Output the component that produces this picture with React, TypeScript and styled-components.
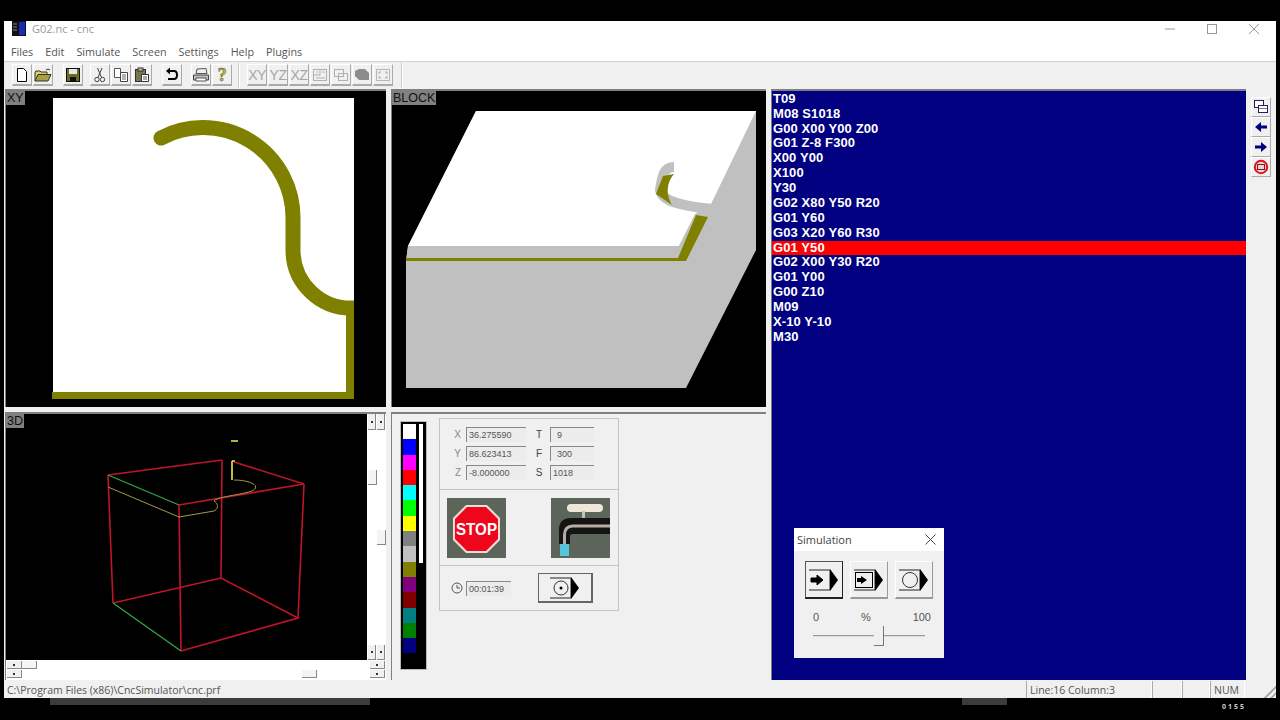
import React from "react";
import styled, { createGlobalStyle } from "styled-components";

const GlobalStyle = createGlobalStyle`
  html, body {
    margin: 0;
    height: 100%;
    background: #000;
    overflow: hidden;
  }
  * { box-sizing: border-box; }
`;

const PALETTE = [
  "#fff", "#0000ff", "#ff00ff", "#ff0000", "#00ffff", "#00ff00", "#ffff00", "#808080",
  "#c0c0c0", "#808000", "#800080", "#800000", "#008080", "#008000", "#000080",
];

const CODE = [
  "T09", "M08 S1018", "G00 X00 Y00 Z00", "G01 Z-8 F300", "X00 Y00", "X100", "Y30",
  "G02 X80 Y50 R20", "G01 Y60", "G03 X20 Y60 R30", "G01 Y50", "G02 X00 Y30 R20",
  "G01 Y00", "G00 Z10", "M09", "X-10 Y-10", "M30",
];
const ACTIVE_LINE = 10;

const MENUS = ["Files", "Edit", "Simulate", "Screen", "Settings", "Help", "Plugins"];

function App() {
  return (
    <Screen>
      <GlobalStyle />
      <Window>
        <TitleBar>
          <AppIcon />
          <TitleText>G02.nc - cnc</TitleText>
          <Controls>
            <svg width="12" height="12" viewBox="0 0 12 12"><path d="M1 6h10" stroke="#999" /></svg>
            <svg width="12" height="12" viewBox="0 0 12 12"><rect x="1.5" y="1.5" width="9" height="9" fill="none" stroke="#999" /></svg>
            <svg width="12" height="12" viewBox="0 0 12 12"><path d="M1 1l10 10M11 1L1 11" stroke="#999" /></svg>
          </Controls>
        </TitleBar>
        <MenuBar>
          {MENUS.map((m) => <MenuItem key={m}>{m}</MenuItem>)}
        </MenuBar>
        <Toolbar>
          <ToolGroup>
            <ToolButton><NewIcon /></ToolButton>
            <ToolButton><OpenIcon /></ToolButton>
          </ToolGroup>
          <ToolGroup $gap={10}>
            <ToolButton><SaveIcon /></ToolButton>
          </ToolGroup>
          <ToolGroup $gap={7}>
            <ToolButton><CutIcon /></ToolButton>
            <ToolButton><CopyIcon /></ToolButton>
            <ToolButton><PasteIcon /></ToolButton>
          </ToolGroup>
          <ToolGroup $gap={10}>
            <ToolButton><UndoIcon /></ToolButton>
          </ToolGroup>
          <ToolGroup $gap={9}>
            <ToolButton><PrintIcon /></ToolButton>
            <ToolButton><HelpIcon /></ToolButton>
          </ToolGroup>
          <ToolSeparator $left={6} />
          <ToolGroup $gap={7}>
            <ToolButton>XY</ToolButton>
            <ToolButton>YZ</ToolButton>
            <ToolButton>XZ</ToolButton>
            <ToolButton><GridIcon /></ToolButton>
            <ToolButton><OverlapIcon /></ToolButton>
            <ToolButton><SolidIcon /></ToolButton>
            <ToolButton><FitIcon /></ToolButton>
          </ToolGroup>
          <ToolSeparator $left={8} />
        </Toolbar>

        <Body>
          <Views>
            <Pane>
              <PaneLabel>XY</PaneLabel>
              <XYDrawing />
            </Pane>
            <Pane>
              <PaneLabel>BLOCK</PaneLabel>
              <BlockDrawing />
            </Pane>
            <Pane3D>
              <PaneLabel>3D</PaneLabel>
              <WireDrawing />
              <VBar>
                <VTrack>
                  <Spin $w={8} $h={16} />
                  <Thumb $w={9} $h={15} $top={40} />
                  <Spin $w={8} $h={15} $end />
                </VTrack>
                <VTrack>
                  <Spin $w={8} $h={16} />
                  <Thumb $w={9} $h={15} $top={100} />
                  <Spin $w={8} $h={15} $end />
                </VTrack>
              </VBar>
              <HBar>
                <HTrack>
                  <Spin $w={15} $h={8} />
                  <Thumb $w={15} $h={8} />
                  <Spin $w={15} $h={8} $end />
                </HTrack>
                <HTrack>
                  <Spin $w={15} $h={8} />
                  <Thumb $w={15} $h={8} $left={280} />
                  <Spin $w={15} $h={8} $end />
                </HTrack>
              </HBar>
            </Pane3D>
            <ControlPane>
              <Palette>
                <Swatches>
                  {PALETTE.map((c) => <Swatch key={c} $color={c} />)}
                </Swatches>
                <Level />
              </Palette>
              <Info>
                <Coords>
                  <CoordLabel>X</CoordLabel><Field>36.275590</Field>
                  <ParamLabel>T</ParamLabel><Field $indent>9</Field>
                  <CoordLabel>Y</CoordLabel><Field>86.623413</Field>
                  <ParamLabel>F</ParamLabel><Field $indent>300</Field>
                  <CoordLabel>Z</CoordLabel><Field>-8.000000</Field>
                  <ParamLabel>S</ParamLabel><Field>1018</Field>
                </Coords>
                <Signs>
                  <StopSign />
                  <Faucet />
                </Signs>
                <TimeRow>
                  <ClockIcon />
                  <TimeField>00:01:39</TimeField>
                  <WideButton><HeadIcon kind="target" /></WideButton>
                </TimeRow>
              </Info>
            </ControlPane>
          </Views>

          <Editor>
            {CODE.map((line, i) => (
              <CodeLine key={i} $active={i === ACTIVE_LINE}>{line}</CodeLine>
            ))}
            <SimWindow>
              <SimTitle>
                Simulation
                <svg width="11" height="11" viewBox="0 0 11 11"><path d="M.5.5l10 10M10.5.5l-10 10" stroke="#444" /></svg>
              </SimTitle>
              <SimButtons>
                <SimButton $pressed><HeadIcon kind="arrow" /></SimButton>
                <SimButton><HeadIcon kind="boxed" /></SimButton>
                <SimButton><HeadIcon kind="circle" /></SimButton>
              </SimButtons>
              <Scale>
                <span>0</span>
                <span>%</span>
                <span>100</span>
              </Scale>
              <Slider>
                <SliderThumb />
              </Slider>
            </SimWindow>
          </Editor>

          <SideBar>
            <SideButton><WindowsIcon /></SideButton>
            <SideButton><ArrowIcon dir="left" /></SideButton>
            <SideButton><ArrowIcon dir="right" /></SideButton>
            <SideButton><NoEntryIcon /></SideButton>
          </SideBar>
        </Body>

        <StatusBar>
          <StatusPath>C:\Program Files (x86)\CncSimulator\cnc.prf</StatusPath>
          <StatusCell $w={126}>Line:16 Column:3</StatusCell>
          <StatusCell $w={30} />
          <StatusCell $w={28} />
          <StatusCell $w={35}>NUM</StatusCell>
          <Grip />
        </StatusBar>
      </Window>
      <Footer>
        <FooterBar $left={46} $w={320} />
        <FooterBar $left={958} $w={45} />
        <FooterTime>0155</FooterTime>
      </Footer>
    </Screen>
  );
}

export default App;

/* ---------- drawings ---------- */

function AppIcon() {
  return (
    <svg width="14" height="15" viewBox="0 0 14 15">
      <rect width="14" height="15" fill="#111" />
      <rect x="7" y="1" width="6" height="13" fill="#1a2bb0" />
      <path d="M1 3h4M1 6h4M1 9h4" stroke="#889" />
    </svg>
  );
}

function XYDrawing() {
  return (
    <svg width="380" height="316" viewBox="6 91 380 316">
      <rect x="53" y="98" width="301" height="294" fill="#fff" />
      <path d="M161 138 A90 90 0 0 1 293 218 V250 A58 58 0 0 0 354 308" fill="none" stroke="#808000" strokeWidth="15" strokeLinecap="round" />
      <rect x="354" y="296" width="10" height="24" fill="#000" />
      <path d="M52 392H346V308h8V399H52z" fill="#808000" />
    </svg>
  );
}

function BlockDrawing() {
  return (
    <svg width="374" height="316" viewBox="392 91 374 316">
      <path d="M406 261V388H686L756 250V111H476L408 246z" fill="#c0c0c0" />
      <path d="M476 111H756L711 204 695 214 679 246H408z" fill="#fff" />
      <path d="M408 246H679L695 215 709 216 686 261H406z" fill="#c0c0c0" />
      <path d="M406 258H678L696 215 708 217 686 261H406z" fill="#808000" />
      <path d="M674 167C662 167 662 180 660 190 662 201 680 206 712 209" fill="none" stroke="#c0c0c0" strokeWidth="10" />
      <path d="M674 174L663 176 656 194 672 205C666 195 666 183 674 174z" fill="#808000" />
    </svg>
  );
}

function WireDrawing() {
  const red = "#c01428";
  return (
    <svg width="361" height="246" viewBox="6 414 361 246">
      <g fill="none" stroke={red} strokeWidth="1.6">
        <path d="M108 475L222 460M234 462L304 484M179 505L304 484" />
        <path d="M108 475L113 603M222 460L221 578M304 484L298 618M179 505L181 651" />
        <path d="M113 603L221 578L298 618L181 651" />
      </g>
      <path d="M108 475L179 505M113 603L181 651" fill="none" stroke="#2fa84a" strokeWidth="1.3" />
      <path d="M108 487L179 517L214 511C220 508 217 502 214 501 216 497 240 495 252 491 262 486 250 480 234 480" fill="none" stroke="#a09a40" strokeWidth="1" />
      <path d="M232 461V480M232 461h3M231 441h7" fill="none" stroke="#f0e850" strokeWidth="1.6" />
    </svg>
  );
}

function StopSign() {
  return (
    <svg width="59" height="60" viewBox="0 0 59 60">
      <rect width="59" height="60" fill="#5c655a" />
      <path d="M19 7H40L53 20V42L40 55H19L6 42V20z" fill="#f2dcd8" />
      <path d="M20 9H39L51 21V41L39 53H20L8 41V21z" fill="#f0061c" />
      <text x="9" y="37" textLength="41" lengthAdjust="spacingAndGlyphs" fontFamily="Liberation Sans, sans-serif" fontWeight="700" fontSize="17" fill="#fff">STOP</text>
    </svg>
  );
}

function Faucet() {
  return (
    <svg width="59" height="60" viewBox="0 0 59 60">
      <rect width="59" height="60" fill="#5c655a" />
      <rect x="16" y="6" width="36" height="8" rx="4" fill="#efe8da" />
      <rect x="31" y="13" width="3" height="7" fill="#c8c0b0" />
      <path d="M59 20H20Q8 20 8 32V46H19V38Q19 36 22 36H59z" fill="#141414" />
      <path d="M59 28H22Q13.5 28 13.5 37V46" fill="none" stroke="#b8aea4" strokeWidth="3" />
      <rect x="9" y="46" width="9" height="12" fill="#55c4dc" />
    </svg>
  );
}

function ClockIcon() {
  return (
    <svg width="12" height="12" viewBox="0 0 12 12">
      <circle cx="6" cy="6" r="5" fill="none" stroke="#555" />
      <path d="M6 3v3h3" fill="none" stroke="#555" />
    </svg>
  );
}

function HeadIcon({ kind }: { kind: "arrow" | "boxed" | "circle" | "target" }) {
  return (
    <svg width="32" height="26" viewBox="0 0 32 26">
      <path d="M1 3H22V23H1" fill="none" stroke="#222" />
      <path d="M22 2L30 13 22 24z" fill="#000" />
      {kind === "arrow" && <path d="M3 13H12M9 8L15 13 9 18V15H3V11H9z" fill="#000" stroke="#000" />}
      {kind === "boxed" && (
        <>
          <rect x="2.5" y="5.5" width="17" height="15" fill="none" stroke="#000" />
          <path d="M4 13H10M8 9L14 13 8 17V15H4V11H8z" fill="#000" />
        </>
      )}
      {kind === "circle" && <circle cx="12" cy="13" r="7.5" fill="#f0f0f0" stroke="#333" />}
      {kind === "target" && (
        <>
          <circle cx="12" cy="13" r="7" fill="#f0f0f0" stroke="#333" />
          <circle cx="12" cy="13" r="1.5" fill="#000" />
        </>
      )}
    </svg>
  );
}

const NewIcon = () => (
  <svg width="16" height="16" viewBox="0 0 16 16">
    <path d="M3.5 1.5h6l3 3v10h-9z" fill="#fff" stroke="#000" />
  </svg>
);
const OpenIcon = () => (
  <svg width="18" height="16" viewBox="0 0 18 16">
    <path d="M1 14V5l1-1h4l1 1h6v2" fill="#d8d060" stroke="#333" />
    <path d="M1 14L4 7.5H17L14 14z" fill="#a8a040" stroke="#333" />
    <path d="M12 3Q14 1 16 3" fill="none" stroke="#333" />
  </svg>
);
const SaveIcon = () => (
  <svg width="16" height="16" viewBox="0 0 16 16">
    <rect x="1.5" y="1.5" width="13" height="13" fill="#6c6c20" stroke="#111" />
    <rect x="4" y="2" width="8" height="5" fill="#e8e8e8" />
    <rect x="5" y="10" width="6" height="4.5" fill="#111" />
  </svg>
);
const CutIcon = () => (
  <svg width="16" height="16" viewBox="0 0 16 16">
    <path d="M5.5 1L9.5 10.5M10 1L6 10.5" stroke="#444" fill="none" />
    <circle cx="5" cy="12.5" r="2.2" fill="none" stroke="#444" />
    <circle cx="10.5" cy="12.5" r="2.2" fill="none" stroke="#444" />
  </svg>
);
const CopyIcon = () => (
  <svg width="16" height="16" viewBox="0 0 16 16">
    <path d="M1.5 1.5h6v9h-6z" fill="#fff" stroke="#555" />
    <path d="M7.5 5.5h7v9h-7z" fill="#fff" stroke="#444" />
    <path d="M9 8h4M9 10h4M9 12h4" stroke="#666" />
  </svg>
);
const PasteIcon = () => (
  <svg width="16" height="16" viewBox="0 0 16 16">
    <rect x="1.5" y="2.5" width="10" height="12" fill="#77774a" stroke="#333" />
    <rect x="4" y="1" width="5" height="3" fill="#bbb" stroke="#333" />
    <path d="M7.5 7.5h7v7h-7z" fill="#fff" stroke="#333" />
    <path d="M9 10h4M9 12h4" stroke="#555" />
  </svg>
);
const UndoIcon = () => (
  <svg width="16" height="16" viewBox="0 0 16 16">
    <path d="M5 4H10Q13 4 13 8T10 12H4" fill="none" stroke="#000" strokeWidth="2" />
    <path d="M6 0.5V7.5L2 4z" fill="#000" />
  </svg>
);
const PrintIcon = () => (
  <svg width="18" height="16" viewBox="0 0 18 16">
    <path d="M5 2l9-.5 1 5H4z" fill="#eee" stroke="#555" />
    <path d="M1.5 8h15v5h-15z" fill="#bbb" stroke="#444" />
    <path d="M4 11h10v3H4z" fill="#fff" stroke="#555" />
  </svg>
);
const HelpIcon = () => (
  <svg width="16" height="18" viewBox="0 0 16 18">
    <text x="8" y="15" textAnchor="middle" fontFamily="Liberation Serif, serif" fontWeight="700" fontSize="18" fill="#c8c020" stroke="#444" strokeWidth=".5">?</text>
  </svg>
);
const GridIcon = () => (
  <svg width="16" height="14" viewBox="0 0 16 14">
    <rect x="1.5" y="1.5" width="13" height="11" fill="none" stroke="#b0b0b0" />
    <path d="M8 2v5M2 7h6M4 4h2M10 4h3M4 10h9" stroke="#b0b0b0" />
  </svg>
);
const OverlapIcon = () => (
  <svg width="16" height="14" viewBox="0 0 16 14">
    <rect x="1.5" y="1.5" width="9" height="7" fill="none" stroke="#b0b0b0" />
    <rect x="5.5" y="5.5" width="9" height="7" fill="none" stroke="#b0b0b0" />
  </svg>
);
const SolidIcon = () => (
  <svg width="16" height="14" viewBox="0 0 16 14">
    <path d="M1 3L5 1H11L15 5V12H5L1 8z" fill="#8c8c8c" />
  </svg>
);
const FitIcon = () => (
  <svg width="16" height="14" viewBox="0 0 16 14">
    <rect x="1.5" y="1.5" width="13" height="11" fill="none" stroke="#b8b8b8" />
    <path d="M4 4h2M4 4v2M12 4h-2M12 4v2M4 10h2M4 10V8M12 10h-2M12 10V8" stroke="#a8a8a8" />
  </svg>
);
const WindowsIcon = () => (
  <svg width="16" height="16" viewBox="0 0 16 16">
    <rect x="1.5" y="1.5" width="9" height="7" fill="#fff" stroke="#202060" />
    <rect x="5.5" y="6.5" width="9" height="7" fill="#fff" stroke="#202060" />
    <path d="M6 9.5h8" stroke="#808090" />
  </svg>
);
const ArrowIcon = ({ dir }: { dir: "left" | "right" }) => (
  <svg width="14" height="12" viewBox="0 0 14 12" transform={dir === "left" ? "scale(-1 1)" : undefined}>
    <path d="M1 4.5H7V1L13 6 7 11V7.5H1z" fill="#000080" />
  </svg>
);
const NoEntryIcon = () => (
  <svg width="16" height="16" viewBox="0 0 16 16">
    <circle cx="8" cy="8" r="6.2" fill="#f4d0d0" stroke="#e0101c" strokeWidth="2" />
    <rect x="4.5" y="5.5" width="7" height="5" fill="none" stroke="#702020" />
  </svg>
);

/* ---------- layout ---------- */

const Screen = styled.div`
  width: 1280px;
  height: 720px;
  padding: 21px 0 0 4px;
  font-family: "Open Sans", "Liberation Sans", sans-serif;
  overflow: hidden;
`;

const Window = styled.div`
  width: 1272px;
  height: 677px;
  background: #f0f0f0;
  display: flex;
  flex-direction: column;
`;

const TitleBar = styled.div`
  height: 20px;
  flex: none;
  background: #fff;
  display: flex;
  align-items: flex-start;
  padding-left: 8px;
`;

const TitleText = styled.span`
  margin-left: 6px;
  font-size: 11px;
  line-height: 16px;
  color: #9a9a9a;
`;

const Controls = styled.div`
  margin-left: auto;
  padding: 2px 16px 0 0;
  display: flex;
  gap: 30px;
`;

const MenuBar = styled.div`
  height: 21px;
  flex: none;
  background: #fff;
  border-bottom: 1px solid #d0d0d0;
  display: flex;
  align-items: center;
  gap: 12px;
  padding: 1px 0 0 7px;
`;

const MenuItem = styled.span`
  font-size: 10.8px;
  color: #555;
`;

const Toolbar = styled.div`
  height: 27px;
  flex: none;
  display: flex;
  align-items: flex-start;
  padding: 2px 0 0 8px;
`;

const ToolGroup = styled.div<{ $gap?: number }>`
  display: flex;
  gap: 1px;
  margin-left: ${(p) => p.$gap ?? 0}px;
`;

const ToolButton = styled.div`
  width: 20px;
  height: 22px;
  background: #f0f0f0;
  border-right: 1px solid #aaa;
  border-bottom: 2px solid #aaa;
  border-top: 1px solid #fff;
  border-left: 1px solid #fff;
  display: flex;
  align-items: center;
  justify-content: center;
  font-family: "Liberation Sans", sans-serif;
  font-size: 14px;
  letter-spacing: -0.5px;
  color: #a6a6a6;
`;

const ToolSeparator = styled.div<{ $left: number }>`
  width: 2px;
  height: 25px;
  margin: -1px 0 0 ${(p) => p.$left}px;
  background: #c8c8c8;
  border-right: 1px solid #fff;
`;

const Body = styled.div`
  height: 591px;
  flex: none;
  display: flex;
  padding-left: 1px;
`;

const Views = styled.div`
  display: grid;
  grid-template-columns: 381px 375px;
  grid-template-rows: 318px 268px;
  column-gap: 5px;
  row-gap: 5px;
`;

const Pane = styled.div`
  position: relative;
  background: #000;
  border-top: 2px solid #808080;
  border-left: 1px solid #808080;
  svg { display: block; }
`;

const Pane3D = styled(Pane)`
  display: grid;
  grid-template-columns: 361px 19px;
  grid-template-rows: 246px 20px;
`;

const PaneLabel = styled.span`
  position: absolute;
  left: 0;
  top: 0;
  height: 14px;
  padding: 0 1px;
  background: #808080;
  color: #111;
  font-family: "Liberation Sans", sans-serif;
  font-size: 12.5px;
  line-height: 14px;
`;

const VBar = styled.div`
  background: #fff;
  display: flex;
  padding-left: 1px;
`;

const VTrack = styled.div`
  width: 9px;
  display: flex;
  flex-direction: column;
`;

const HBar = styled.div`
  grid-column: 1 / 3;
  background: #fff;
  display: flex;
  flex-direction: column;
  gap: 1px;
  padding: 1px 1px 0 1px;
`;

const HTrack = styled.div`
  display: flex;
`;

const Spin = styled.div<{ $w: number; $h: number; $end?: boolean }>`
  width: ${(p) => p.$w}px;
  height: ${(p) => p.$h}px;
  flex: none;
  margin-${(p) => (p.$h > p.$w ? "top" : "left")}: ${(p) => (p.$end ? "auto" : "0")};
  background: #f0f0f0;
  border-right: 1px solid #888;
  border-bottom: 1px solid #888;
  display: flex;
  align-items: center;
  justify-content: center;
  &::after {
    content: "";
    width: 2px;
    height: 2px;
    background: #333;
  }
`;

const Thumb = styled.div<{ $w: number; $h: number; $top?: number; $left?: number }>`
  width: ${(p) => p.$w}px;
  height: ${(p) => p.$h}px;
  flex: none;
  margin-top: ${(p) => p.$top ?? 0}px;
  margin-left: ${(p) => p.$left ?? 0}px;
  background: #f4f4f4;
  border-right: 1px solid #888;
  border-bottom: 1px solid #888;
`;

const ControlPane = styled.div`
  background: #f0f0f0;
  border-top: 2px solid #808080;
  border-left: 1px solid #808080;
  display: flex;
  align-items: flex-start;
  padding: 4px 0 0 8px;
`;

const Palette = styled.div`
  margin-top: 3px;
  width: 27px;
  height: 249px;
  background: #000;
  border: 1px solid #bbb;
  display: flex;
  align-items: flex-start;
  padding: 2px 0 0 2px;
  gap: 3px;
`;

const Swatches = styled.div`
  width: 13px;
  display: flex;
  flex-direction: column;
`;

const Swatch = styled.div<{ $color: string }>`
  height: 15.3px;
  background: ${(p) => p.$color};
`;

const Level = styled.div`
  width: 4px;
  height: 139px;
  background: #fff;
`;

const Info = styled.div`
  width: 180px;
  margin-left: 12px;
  border: 1px solid #c4c4c4;
  font-family: "Liberation Sans", sans-serif;
  font-size: 9px;
  color: #555;
`;

const Coords = styled.div`
  height: 71px;
  padding-top: 8px;
  display: grid;
  grid-template-columns: 26px 60px 24px 44px;
  grid-auto-rows: 15px;
  row-gap: 4px;
  align-items: center;
  border-bottom: 1px solid #c4c4c4;
`;

const CoordLabel = styled.span`
  text-align: right;
  padding-right: 5px;
  font-size: 10px;
  color: #888;
`;

const ParamLabel = styled.span`
  text-align: center;
  padding-left: 2px;
  font-size: 10px;
  color: #444;
`;

const Field = styled.span<{ $indent?: boolean }>`
  height: 15px;
  line-height: 15px;
  padding-left: ${(p) => (p.$indent ? 6 : 2)}px;
  background: #ececec;
  border-top: 1px solid #888;
  border-left: 1px solid #888;
`;

const Signs = styled.div`
  height: 76px;
  display: flex;
  gap: 45px;
  padding: 8px 0 0 7px;
  border-bottom: 1px solid #c4c4c4;
  svg { display: block; }
`;

const TimeRow = styled.div`
  height: 44px;
  display: flex;
  align-items: center;
  padding-left: 11px;
`;

const TimeField = styled(Field)`
  width: 45px;
  margin-left: 3px;
`;

const WideButton = styled.div`
  width: 55px;
  height: 30px;
  margin-left: 27px;
  background: #f0f0f0;
  border: 1px solid #666;
  border-right-width: 2px;
  border-bottom-width: 2px;
  display: flex;
  align-items: center;
  justify-content: center;
`;

const Editor = styled.div`
  position: relative;
  width: 475px;
  margin-left: 5px;
  background: #000080;
  border-top: 2px solid #808080;
  border-left: 1px solid #808080;
  font-family: "Liberation Sans", sans-serif;
  padding-top: 0.75px;
`;

const CodeLine = styled.div<{ $active?: boolean }>`
  height: 14.875px;
  line-height: 14.875px;
  font-size: 13px;
  font-weight: 700;
  letter-spacing: 0.1px;
  color: #fff;
  padding-left: 1px;
  background: ${(p) => (p.$active ? "#ff0000" : "transparent")};
`;

const SimWindow = styled.div`
  position: absolute;
  left: 22px;
  top: 437px;
  width: 150px;
  height: 130px;
  background: #f0f0f0;
  font-family: "Open Sans", sans-serif;
`;

const SimTitle = styled.div`
  height: 23px;
  background: #fff;
  padding: 0 8px 0 3px;
  display: flex;
  align-items: center;
  justify-content: space-between;
  font-size: 11px;
  color: #444;
`;

const SimButtons = styled.div`
  display: flex;
  gap: 7px;
  padding: 10px 0 0 11px;
`;

const SimButton = styled.div<{ $pressed?: boolean }>`
  width: 38px;
  height: 38px;
  background: #f0f0f0;
  border-top: 1px solid ${(p) => (p.$pressed ? "#555" : "#fff")};
  border-left: 1px solid ${(p) => (p.$pressed ? "#555" : "#fff")};
  border-right: 1px solid ${(p) => (p.$pressed ? "#222" : "#999")};
  border-bottom: 2px solid ${(p) => (p.$pressed ? "#222" : "#999")};
  display: flex;
  align-items: center;
  justify-content: center;
`;

const Scale = styled.div`
  display: flex;
  justify-content: space-between;
  padding: 12px 13px 0 19px;
  font-family: "Liberation Sans", sans-serif;
  font-size: 11px;
  line-height: 12px;
  color: #555;
`;

const Slider = styled.div`
  position: relative;
  height: 2px;
  margin: 12px 19px 0 19px;
  background: #999;
  border-bottom: 1px solid #ddd;
`;

const SliderThumb = styled.div`
  position: absolute;
  left: 61px;
  top: -9px;
  width: 10px;
  height: 20px;
  background: #f0f0f0;
  border-right: 1px solid #777;
  border-bottom: 1px solid #777;
`;

const SideBar = styled.div`
  width: 30px;
  display: flex;
  flex-direction: column;
  padding: 8px 0 0 5px;
`;

const SideButton = styled.div`
  width: 20px;
  height: 20px;
  border-right: 1px solid #aaa;
  border-bottom: 1px solid #aaa;
  border-top: 1px solid #fff;
  border-left: 1px solid #fff;
  display: flex;
  align-items: center;
  justify-content: center;
`;

const StatusBar = styled.div`
  height: 17px;
  margin-top: 1px;
  flex: none;
  background: #f0f0f0;
  display: flex;
  align-items: stretch;
  font-size: 10.5px;
  line-height: 18px;
  color: #555;
`;

const StatusPath = styled.div`
  flex: 1;
  padding-left: 3px;
`;

const StatusCell = styled.div<{ $w: number }>`
  width: ${(p) => p.$w}px;
  padding-left: 3px;
  border-left: 1px solid #aaa;
  border-right: 1px solid #fff;
`;

const Grip = styled.div`
  width: 31px;
  background: linear-gradient(135deg, transparent 74%, #aaa 75%, #aaa 79%, transparent 80%, transparent 87%, #aaa 88%, #aaa 92%, transparent 93%);
`;

const Footer = styled.div`
  position: relative;
  height: 22px;
`;

const FooterBar = styled.div<{ $left: number; $w: number }>`
  position: absolute;
  left: ${(p) => p.$left}px;
  top: 0;
  width: ${(p) => p.$w}px;
  height: 7px;
  background: #3c3c3c;
`;

const FooterTime = styled.div`
  position: absolute;
  left: 1218px;
  top: 5px;
  font-size: 7px;
  line-height: 7px;
  letter-spacing: 2px;
  font-weight: 700;
  color: #ccc;
`;
